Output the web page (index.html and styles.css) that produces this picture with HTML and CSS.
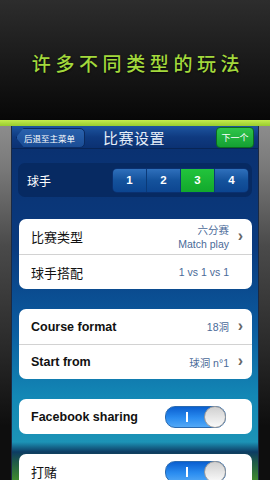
FILE: index.html
```html
<!DOCTYPE html>
<html lang="zh">

<head>
  <meta charset="UTF-8">
  <meta name="viewport" content="width=device-width, initial-scale=1.0">
  <title>比赛设置</title>
  <link rel="stylesheet" href="styles.css">
</head>

<body>

  <header class="banner">
    <h1 class="banner-title">许多不同类型的玩法</h1>
  </header>
  <div class="stripe"></div>

  <div class="device">
    <div class="bezel"></div>

    <div class="screen">
      <nav class="navbar">
        <button class="back-button">后退至主菜单</button>
        <span class="nav-title">比赛设置</span>
        <button class="next-button">下一个</button>
      </nav>

      <div class="content">
        <!-- Players -->
        <div class="players">
          <span class="players-label">球手</span>
          <div class="segments">
            <span class="segment">1</span>
            <span class="segment">2</span>
            <span class="segment active">3</span>
            <span class="segment">4</span>
          </div>
        </div>

        <div class="card">
          <div class="row">
            <span class="label">比赛类型</span>
            <span class="value two-line">六分赛<br>Match play</span>
            <span class="chevron">›</span>
          </div>
          <div class="row">
            <span class="label">球手搭配</span>
            <span class="value">1 vs 1 vs 1</span>
            <span class="chevron"></span>
          </div>
        </div>

        <div class="card">
          <div class="row">
            <span class="label bold">Course format</span>
            <span class="value">18洞</span>
            <span class="chevron">›</span>
          </div>
          <div class="row">
            <span class="label bold">Start from</span>
            <span class="value">球洞 n°1</span>
            <span class="chevron">›</span>
          </div>
        </div>

        <div class="card">
          <div class="row">
            <span class="label bold">Facebook sharing</span>
            <span class="toggle"><span class="toggle-mark"></span><span class="knob"></span></span>
          </div>
        </div>

        <div class="card">
          <div class="row">
            <span class="label">打赌</span>
            <span class="toggle"><span class="toggle-mark"></span><span class="knob"></span></span>
          </div>
        </div>
      </div>
    </div>

    <div class="bezel"></div>
  </div>

</body>

</html>
```

FILE: styles.css
```css
body {
  font-family: 'Liberation Sans', 'Noto Sans CJK SC', sans-serif;
  background-color: #111;
  margin: 0;
  padding: 0;
  width: 270px;
  height: 480px;
  overflow: hidden;
}

.banner {
  height: 120px;
  display: flex;
  align-items: center;
  justify-content: center;
  background: linear-gradient(#2d2d2d, #1a1a1a 50%, #070707);
}

.banner-title {
  margin: 4px 0 0 6px;
  font-family: 'Noto Sans CJK SC', sans-serif;
  font-size: 19px;
  font-weight: 500;
  letter-spacing: 4.6px;
  color: #a3d93c;
  text-shadow: 0 1px 2px rgba(0, 0, 0, 0.8);
}

.stripe {
  height: 6px;
  background: linear-gradient(#c4ec4e, #98cc2e);
}

.device {
  display: flex;
  height: 354px;
}

.bezel {
  width: 11px;
  background: linear-gradient(#8c8c8c, #7a7a7a 40px, #4a4a4a 120px, #2a2a2a 220px, #0e0e0e 300px);
}

.screen {
  flex: 1;
  display: flex;
  flex-direction: column;
  border-left: 1px solid #1b2a44;
  border-right: 1px solid #1b2a44;
  background: linear-gradient(#0a2f6e, #0a3a7e 120px, #0b5a9e 200px, #1387b5 270px, #1c93b6 316px, #0d3c63 326px, #1f5a48 336px, #3f8a2e 354px);
}

.navbar {
  height: 32px;
  display: flex;
  align-items: center;
  padding: 1px 4px 0 4px;
  background: linear-gradient(#1d55a0, #0f3a80 50%, #0b3172);
  border-bottom: 1px solid #082556;
}

.back-button {
  height: 20px;
  width: 69px;
  padding: 0 0 0 7px;
  border: 1px solid #0a2a60;
  border-radius: 3px 5px 5px 3px;
  background: linear-gradient(#2a62ae, #1a4c94);
  clip-path: polygon(8px 0, 100% 0, 100% 100%, 8px 100%, 0 50%);
  color: #fff;
  font-family: 'Noto Sans CJK SC', sans-serif;
  font-size: 8.5px;
  text-align: left;
}

.nav-title {
  flex: 1;
  margin-left: 18px;
  font-family: 'Noto Sans CJK SC', sans-serif;
  font-size: 15px;
  color: #e6eef8;
  letter-spacing: 0.5px;
}

.next-button {
  height: 21px;
  width: 38px;
  padding: 0;
  border: 1px solid #0c6a20;
  border-radius: 4px;
  background: linear-gradient(#2fc54a, #14a032);
  color: #fff;
  font-family: 'Noto Sans CJK SC', sans-serif;
  font-size: 9px;
}

.content {
  display: flex;
  flex-direction: column;
  gap: 20px;
  padding: 14px 6px 0 7px;
}

.players {
  display: flex;
  align-items: center;
  justify-content: space-between;
  height: 34px;
  margin: 0 0 2px -1px;
  padding: 0 3px 0 9px;
  border-radius: 7px;
  background-color: #072a62;
}

.players-label {
  font-family: 'Noto Sans CJK SC', sans-serif;
  font-size: 12px;
  color: #fff;
}

.segments {
  display: flex;
  height: 23px;
  border-radius: 5px;
  overflow: hidden;
  border: 1px solid #0a3070;
}

.segment {
  width: 33px;
  display: flex;
  align-items: center;
  justify-content: center;
  font-size: 11.5px;
  font-weight: bold;
  color: #fff;
  background: linear-gradient(#2f70bc, #14529c 50%, #0c4590);
  border-left: 1px solid #0b3a78;
}

.segment:first-child {
  border-left: none;
}

.segment.active {
  background: linear-gradient(#22c43c, #12a82c);
}

.card {
  background-color: #fff;
  border-radius: 7px;
  overflow: hidden;
}

.row {
  height: 35px;
  display: flex;
  align-items: center;
  padding: 0 9px 0 12px;
}

.row + .row {
  border-top: 1px solid #d2d2d2;
  height: 34px;
}

.label {
  flex: 1;
  font-size: 13px;
  color: #111;
  font-family: 'Noto Sans CJK SC', sans-serif;
}

.label.bold {
  font-family: 'Liberation Sans', sans-serif;
  font-weight: bold;
  font-size: 12.5px;
}

.value {
  font-size: 10.5px;
  color: #4a6a98;
  text-align: right;
}

.value.two-line {
  line-height: 14px;
}

.chevron {
  width: 14px;
  text-align: right;
  font-size: 16px;
  font-weight: bold;
  color: #666;
  margin-top: -2px;
}

.toggle {
  position: relative;
  width: 59px;
  height: 20px;
  margin-right: 17px;
  border-radius: 10px;
  background: linear-gradient(#0a5fd0, #2a8cf0 55%, #52a8f6);
  border: 1px solid #2a6ab0;
}

.toggle-mark {
  position: absolute;
  left: 20px;
  top: 5px;
  width: 2px;
  height: 10px;
  background-color: #fff;
}

.knob {
  position: absolute;
  right: -1px;
  top: -1px;
  width: 20px;
  height: 20px;
  border-radius: 50%;
  border: 1px solid #9a9a9a;
  background: linear-gradient(#d0d0d0, #fafafa);
}
```
